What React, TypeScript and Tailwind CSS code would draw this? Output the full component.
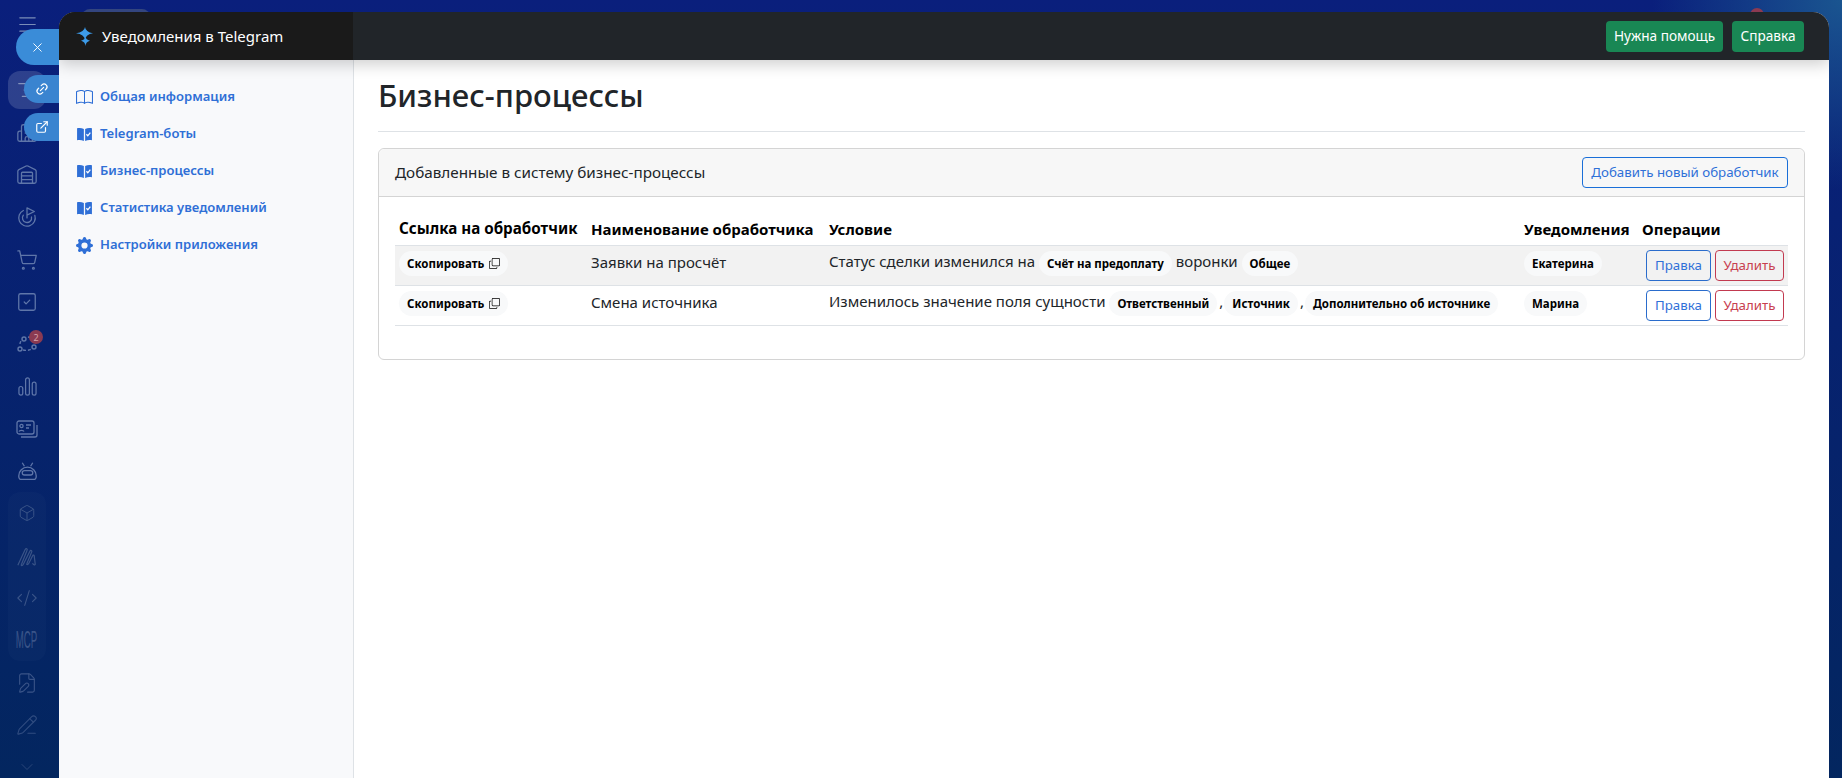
import type { ReactNode } from 'react'
import {
  AlignRight,
  Box,
  Building2,
  ChevronDown,
  CodeXml,
  ExternalLink,
  FilePen,
  Goal,
  Link2,
  Menu,
  PencilLine,
  ShoppingCart,
  SquareCheck,
  Warehouse,
  X,
} from 'lucide-react'
import { BsBook, BsCopy, BsGearFill } from 'react-icons/bs'

const BookCheck = () => (
  <svg viewBox="0 0 16 16" className="h-[17px] w-[17px] shrink-0" fill="#2f6fd6">
    <path d="M1 2.200c1.900-.7 4.300-.6 6.400.7v11.300C5.300 13 2.900 12.800 1 13.400z" />
    <path d="M15 2.200c-1.900-.7-4.300-.6-6.400.7v11.300c2.100-1.200 4.500-1.400 6.400-.8z" />
    <path d="M9.800 7.800l1.300 1.400 2.400-3" fill="none" stroke="#fff" strokeWidth="1.200" />
  </svg>
)

const Sparkle = () => (
  <svg viewBox="0 0 18 19" className="h-[19px] w-[18px] shrink-0" fill="#3d9be9">
    <path d="M9 0Q9.600 5 17 6.300 9.600 7.500 9 13 8.400 7.500 0 6.300 8.400 5 9 0z" />
    <path d="M9.500 9.500Q9.900 12.700 14 13.800 9.900 14.900 9.500 19 9.100 14.900 5 13.800 9.100 12.700 9.500 9.500z" />
  </svg>
)

const FlowIcon = () => (
  <svg viewBox="0 0 24 24" className="h-6 w-6" fill="none" stroke="currentColor" strokeWidth="1.400">
    <circle cx="9" cy="7" r="2" />
    <circle cx="19" cy="15" r="2" />
    <circle cx="5" cy="17" r="2" />
    <path d="M5 12c0-1.500.6-2.500 1.500-3.500M8 18c3 .8 6 .5 9-1.200M13 5c3 .3 5 2.500 6 7" strokeDasharray="3 2" />
  </svg>
)

const BarsIcon = () => (
  <svg viewBox="0 0 20 20" className="h-[19px] w-[19px]" fill="none" stroke="currentColor" strokeWidth="1.300">
    <rect x="1" y="10" width="4" height="9" rx="2" />
    <rect x="8" y="1" width="4" height="18" rx="2" />
    <rect x="15" y="5.500" width="4" height="13.500" rx="2" />
  </svg>
)

const CardsIcon = () => (
  <svg viewBox="0 0 22 18" className="h-[18px] w-[22px]" fill="none" stroke="currentColor" strokeWidth="1.300">
    <rect x="1" y="1" width="17" height="13" rx="2" />
    <path d="M21 5v10a2 2 0 0 1-2 2H5" />
    <circle cx="5.500" cy="6" r="1.600" />
    <path d="M3 11.500c.5-1.500 4.500-1.500 5 0M10 5h5M10 8h3" />
  </svg>
)

const RobotIcon = () => (
  <svg viewBox="0 0 24 24" className="h-[21px] w-[21px]" fill="none" stroke="currentColor" strokeWidth="1.500">
    <path d="M6 2l2.500 4M18 2l-2.500 4" />
    <path d="M2 17a10 10 0 0 1 20 0c0 2.500-1 4-3 4H5c-2 0-3-1.500-3-4z" />
    <rect x="6" y="11" width="12" height="5" rx="2.500" />
  </svg>
)

const ScribbleIcon = () => (
  <svg viewBox="0 0 24 24" className="h-[22px] w-[22px]" fill="none" stroke="currentColor" strokeWidth="1.300">
    <path d="M2 22L10 5c1-2 3-1 2 1L6 21c-1 2 1 2 2 0l7-14c1-2 3-1 2 1l-5 12c-1 2 1 2 2 0l4-8c1-2 2-1 2 1l1 8c0 1-2 1-3-1" />
  </svg>
)

const RailItem = ({ children, className = '' }: { children: ReactNode; className?: string }) => (
  <div className={`relative flex h-[42.300px] items-center justify-center ${className}`}>{children}</div>
)

const Rail = () => (
  <aside className="relative h-[778px] w-[59px] shrink-0 overflow-hidden pt-[3px] pr-[5px] text-[#5f76a9]">
    <RailItem className="mb-[24px] text-[#7a8db8]">
      <Menu size={23} strokeWidth={1.300} />
    </RailItem>
    <RailItem>
      <div className="flex h-[38px] w-[38px] items-center justify-center rounded-xl bg-white/15 text-[#8494bd]">
        <AlignRight size={22} strokeWidth={1.500} />
      </div>
    </RailItem>
    <RailItem><Building2 size={22} strokeWidth={1.400} /></RailItem>
    <RailItem><Warehouse size={22} strokeWidth={1.400} /></RailItem>
    <RailItem><Goal size={22} strokeWidth={1.400} /></RailItem>
    <RailItem><ShoppingCart size={22} strokeWidth={1.400} /></RailItem>
    <RailItem><SquareCheck size={22} strokeWidth={1.400} /></RailItem>
    <RailItem>
      <FlowIcon />
      <span className="absolute top-[7px] left-[29px] flex h-[14px] w-[14px] items-center justify-center rounded-full bg-[#8b3a52] text-[9px] leading-none text-[#d8a0a8]">
        2
      </span>
    </RailItem>
    <RailItem><BarsIcon /></RailItem>
    <RailItem><CardsIcon /></RailItem>
    <RailItem><RobotIcon /></RailItem>
    <div className="mx-2 flex flex-col rounded-xl bg-white/[0.02] text-[#3a5488]">
      <RailItem><Box size={18} strokeWidth={1.300} /></RailItem>
      <RailItem><ScribbleIcon /></RailItem>
      <RailItem><CodeXml size={22} strokeWidth={1.200} /></RailItem>
      <RailItem>
        <span className="inline-block scale-x-[.42] font-['Liberation_Sans',sans-serif] text-[23px] leading-none">MCP</span>
      </RailItem>
    </div>
    <RailItem className="text-[#3a5488]"><FilePen size={22} strokeWidth={1.200} /></RailItem>
    <RailItem className="text-[#304c80]"><PencilLine size={22} strokeWidth={1.200} /></RailItem>
    <RailItem className="text-[#2a4679]"><ChevronDown size={20} strokeWidth={1.200} /></RailItem>

    <div className="absolute top-[29px] left-4 flex h-9 w-[43px] items-center justify-center rounded-l-full bg-[#3a8cd8] text-white">
      <X size={15} strokeWidth={1.500} />
    </div>
    <div className="absolute top-[75px] left-6 flex h-7 w-[35px] items-center justify-center rounded-l-full bg-[#3a84d0] text-white">
      <Link2 size={14} className="-rotate-45" />
    </div>
    <div className="absolute top-[113px] left-6 flex h-7 w-[35px] items-center justify-center rounded-l-full bg-[#3a84d0] text-white">
      <ExternalLink size={14} />
    </div>
  </aside>
)

const navItems = [
  { label: 'Общая информация', icon: <BsBook className="h-[17px] w-[17px] shrink-0" /> },
  { label: 'Telegram-боты', icon: <BookCheck /> },
  { label: 'Бизнес-процессы', icon: <BookCheck /> },
  { label: 'Статистика уведомлений', icon: <BookCheck /> },
  { label: 'Настройки приложения', icon: <BsGearFill className="h-[17px] w-[17px] shrink-0" /> },
]

const Badge = ({ children }: { children: ReactNode }) => (
  <span className="inline-flex h-[25px] translate-y-px items-center rounded-full bg-[#f8f9fa] px-2 align-middle text-[11.500px] font-bold text-black">
    {children}
  </span>
)

const Comma = () => <span className="mr-[1px] ml-[2px]">,</span>

const OutlineButton = ({ label, danger }: { label: string; danger?: boolean }) => (
  <button
    className={
      danger
        ? 'h-[31px] w-[69px] shrink-0 rounded border border-[#c23a50] pt-px text-[13.300px] text-[#c8404f]'
        : 'h-[31px] w-[65px] shrink-0 rounded border border-[#2a6ccc] pt-px text-[13.300px] text-[#2f70d8]'
    }
  >
    {label}
  </button>
)

const rows = [
  {
    name: 'Заявки на просчёт',
    user: 'Екатерина',
    striped: true,
    condition: (
      <>
        Статус сделки изменился на <Badge>Счёт на предоплату</Badge> воронки <Badge>Общее</Badge>
      </>
    ),
  },
  {
    name: 'Смена источника',
    user: 'Марина',
    striped: false,
    condition: (
      <>
        Изменилось значение поля сущности <Badge>Ответственный</Badge>
        <Comma />
        <Badge>Источник</Badge>
        <Comma />
        <Badge>Дополнительно об источнике</Badge>
      </>
    ),
  },
]

export default function App() {
  return (
    <div className="relative flex h-[778px] overflow-hidden bg-[radial-gradient(circle_at_100%_0%,#1a5590_0,transparent_190px),linear-gradient(180deg,#0a1f7c,#03265f)] font-['Noto_Sans',sans-serif] text-[#212529]">
      <Rail />
      <div className="absolute top-[9px] left-[82px] h-6 w-[68px] rounded-lg bg-[#33457f]" />
      <div className="absolute top-2 left-[1750px] h-[14px] w-[14px] rounded-full bg-[#8b3a52]" />
      <div className="relative mt-3 mr-[13px] flex min-w-0 flex-1 flex-col overflow-hidden rounded-t-2xl bg-white">
        <header className="z-10 flex h-12 shrink-0 bg-[#212529] shadow-[0_4px_16px_rgba(0,0,0,0.2)]">
          <div className="flex w-[294px] items-center gap-[8px] bg-[#1a1a1a] pl-[17px] text-[15px] text-white">
            <Sparkle />
            Уведомления в Telegram
          </div>
          <div className="flex flex-1 items-center justify-end gap-[9px] pr-[25px]">
            <button className="h-[31px] w-[117px] rounded bg-[#198754] text-[13.600px] text-white">Нужна помощь</button>
            <button className="h-[31px] w-[72px] rounded bg-[#198754] text-[13.600px] text-white">Справка</button>
          </div>
        </header>
        <div className="flex min-h-0 flex-1">
          <nav className="flex w-[295px] shrink-0 flex-col gap-[11px] border-r border-[#dee2e6] bg-[#f8f9fb] pt-[24px] pl-[17px] text-[#2f6fd6]">
            {navItems.map((item) => (
              <a key={item.label} className="flex h-[26px] items-center gap-[7px] text-[13.050px] font-semibold">
                {item.icon}
                {item.label}
              </a>
            ))}
          </nav>
          <main className="min-w-0 flex-1 px-6">
            <h1 className="border-b border-[#dee2e6] pt-[15px] pb-[16px] text-[31px] leading-[40px] font-medium">
              Бизнес-процессы
            </h1>
            <section className="mt-4 rounded-md border border-[#d4d4d4]">
              <div className="flex h-12 items-center justify-between rounded-t-md border-b border-[#d4d4d4] bg-[#f7f7f7] px-4">
                <span className="text-[15.250px]">Добавленные в систему бизнес-процессы</span>
                <button className="h-[31px] w-[206px] rounded border border-[#1a6fd8] text-[13.300px] text-[#2f70d8]">
                  Добавить новый обработчик
                </button>
              </div>
              <div className="p-4 pb-[17px]">
                <table className="mb-4 w-full table-fixed border-collapse text-[15px] text-black">
                  <colgroup>
                    <col className="w-[192px]" />
                    <col className="w-[238px]" />
                    <col />
                    <col className="w-[118px]" />
                    <col className="w-[151px]" />
                  </colgroup>
                  <thead>
                    <tr className="h-[32px] border-b border-[#dee2e6] text-left font-bold">
                      <th className="px-[4px] text-[15.200px] whitespace-nowrap">Ссылка на обработчик</th>
                      <th className="px-[4px] whitespace-nowrap">Наименование обработчика</th>
                      <th className="px-[4px]">Условие</th>
                      <th className="px-[5px]">Уведомления</th>
                      <th className="px-[5px]">Операции</th>
                    </tr>
                  </thead>
                  <tbody>
                    {rows.map((row) => (
                      <tr key={row.name} className={`h-10 border-b border-[#dee2e6] ${row.striped ? 'bg-[#f2f2f2]' : ''}`}>
                        <td className="px-[4px] pb-[5px]">
                          <Badge>
                            Скопировать
                            <BsCopy className="ml-[5px] h-[11px] w-[11px]" />
                          </Badge>
                        </td>
                        <td className="px-[4px] pb-[5px] text-[#212529]">{row.name}</td>
                        <td className="px-[4px] pb-[5px] whitespace-nowrap text-[#212529]">{row.condition}</td>
                        <td className="px-[5px] pb-[5px]">
                          <Badge>{row.user}</Badge>
                        </td>
                        <td className="pr-[4px] pl-[9px]">
                          <div className="flex gap-[4px]">
                            <OutlineButton label="Правка" />
                            <OutlineButton label="Удалить" danger />
                          </div>
                        </td>
                      </tr>
                    ))}
                  </tbody>
                </table>
              </div>
            </section>
          </main>
        </div>
      </div>
    </div>
  )
}
